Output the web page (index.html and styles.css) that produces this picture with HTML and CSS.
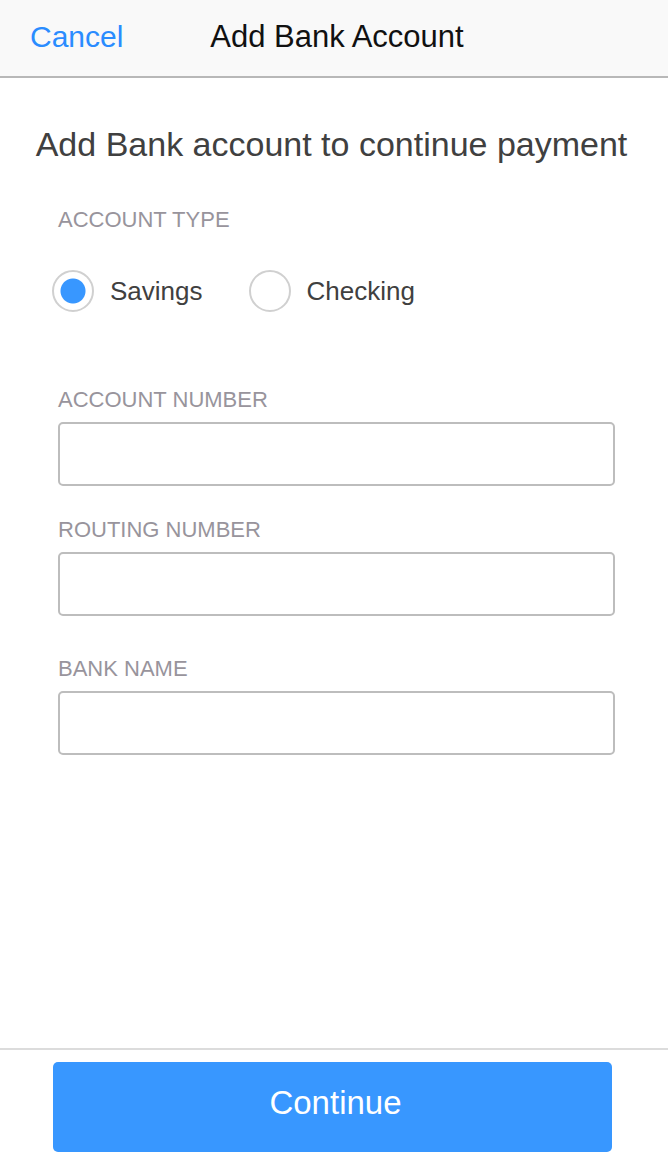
FILE: index.html
```html
<!DOCTYPE html>
<html lang="en">
<head>
<meta charset="utf-8">
<meta name="viewport" content="width=device-width, initial-scale=1">
<title>Add Bank Account</title>
<link rel="stylesheet" href="styles.css">
</head>
<body>
<form class="screen">
  <header class="bar">
    <button class="bar-cancel" type="button">Cancel</button>
    <h1 class="bar-title">Add Bank Account</h1>
  </header>
  <main class="content">
    <h2 class="heading">Add Bank account to continue payment</h2>
    <fieldset class="types">
      <legend class="label">ACCOUNT TYPE</legend>
      <div class="options">
        <label class="option"><input class="radio" type="radio" name="type" checked>Savings</label>
        <label class="option"><input class="radio" type="radio" name="type">Checking</label>
      </div>
    </fieldset>
    <div class="fields">
      <div class="field">
        <label class="label" for="account">ACCOUNT NUMBER</label>
        <input class="input" id="account" type="text">
      </div>
      <div class="field">
        <label class="label" for="routing">ROUTING NUMBER</label>
        <input class="input" id="routing" type="text">
      </div>
      <div class="field field-bank">
        <label class="label" for="bank">BANK NAME</label>
        <input class="input" id="bank" type="text">
      </div>
    </div>
  </main>
  <footer class="footer">
    <button class="continue" type="submit">Continue</button>
  </footer>
</form>
</body>
</html>
```
FILE: styles.css
```css
* {
  box-sizing: border-box;
}

body {
  margin: 0;
  background: #fff;
  color: #404040;
  font-family: "Liberation Sans", Arial, sans-serif;
}

button,
input {
  font: inherit;
}

.screen {
  display: flex;
  flex-direction: column;
  min-height: 100vh;
}

.bar {
  display: grid;
  grid-template-columns: 1fr auto 1fr;
  align-items: center;
  padding: 20px 24px 22px 30px;
  border-bottom: 2px solid #b8b8b8;
  background: #f9f9f9;
  line-height: 34px;
}

.bar-cancel {
  justify-self: start;
  padding: 0;
  border: 0;
  background: none;
  color: #2a8cff;
  font-size: 30px;
}

.bar-title {
  margin: 0;
  color: #111;
  font-size: 31px;
  font-weight: 400;
}

.content {
  flex: 1;
  padding: 44px 53px 40px 58px;
}

.heading {
  margin: 0 -16px 0 -26px;
  font-size: 34px;
  font-weight: 400;
  line-height: 44px;
  text-align: center;
}

.types {
  margin: 40px 0 0;
  padding: 0;
  border: 0;
}

.label {
  padding: 0;
  color: #98949c;
  font-size: 22px;
  line-height: 28px;
}

.options {
  display: flex;
  gap: 46px;
  margin: 36px 0 0 -6px;
}

.option {
  display: flex;
  align-items: center;
  gap: 16px;
  font-size: 26px;
}

.radio {
  appearance: none;
  width: 42px;
  height: 42px;
  margin: 0;
  border: 2px solid #d0d0d0;
  border-radius: 50%;
  background: #fff;
}

.radio:checked {
  background: radial-gradient(circle, #3897ff 12px, #fff 13px);
}

.fields {
  display: flex;
  flex-direction: column;
  gap: 30px;
  margin-top: 74px;
}

.field {
  display: flex;
  flex-direction: column;
  gap: 8px;
}

.field-bank {
  margin-top: 9px;
}

.input {
  width: 100%;
  height: 64px;
  padding: 0 16px;
  border: 2px solid #bdbdbd;
  border-radius: 5px;
  background: #fff;
  color: #404040;
  font-size: 26px;
}

.footer {
  padding: 12px 56px 12px 53px;
  border-top: 2px solid #dcdcdc;
}

.continue {
  width: 100%;
  padding: 20px 0 28px 6px;
  border: 0;
  border-radius: 5px;
  background: #3897ff;
  color: #fff;
  font-size: 33px;
  line-height: 42px;
}
```
